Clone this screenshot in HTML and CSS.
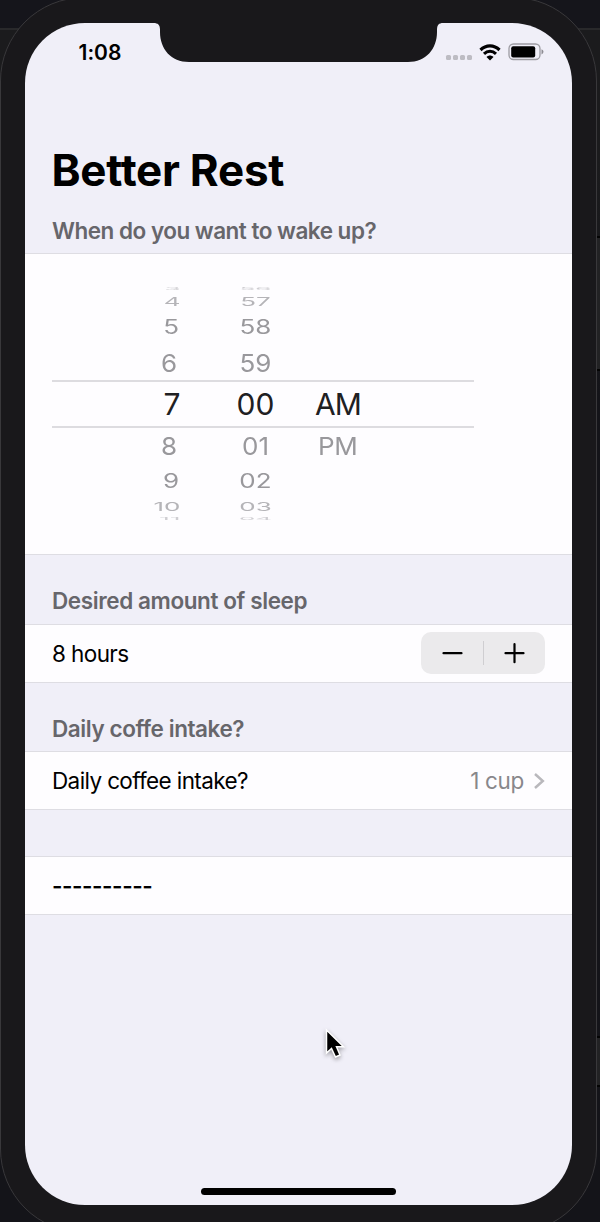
FILE: index.html
```html
<!DOCTYPE html>
<html lang="en">
<head>
<meta charset="utf-8">
<title>Better Rest</title>
<link rel="stylesheet" href="styles.css">
</head>
<body>
<div class="desktop">
  <div class="edge edge-mid"></div>
  <div class="edge edge-low"></div>
  <div class="bezel"></div>
  <main class="screen">
    <header class="status">
      <span class="time">1:08</span>
      <div class="indicators">
        <span class="signal"><i></i><i></i><i></i><i></i></span>
        <svg class="wifi" width="22" height="17" viewBox="0 0 22 17">
          <path d="M1.500 6C7 .6 15 .6 20.500 6" fill="none" stroke="#000" stroke-width="3.200"/>
          <path d="M5 9.800C8.500 6.400 13.500 6.400 17 9.800" fill="none" stroke="#000" stroke-width="3"/>
          <path d="M11 16.500L7.500 12.900C9.600 10.900 12.400 10.900 14.500 12.900Z"/>
        </svg>
        <svg class="battery" width="36" height="18" viewBox="0 0 36 18">
          <rect x="1" y="1" width="31" height="15.500" rx="4.500" fill="none" stroke="#9c9ba1" stroke-width="1.300"/>
          <rect x="3.200" y="3.200" width="24" height="11.200" rx="2"/>
          <path d="M33.500 6.200Q35.500 7 35.500 8.800T33.500 11.400Z" fill="#8e8d93"/>
        </svg>
      </div>
    </header>
    <h1 class="title">Better Rest</h1>

    <h2 class="section-title first"><span class="t-wake">When do you want to wake up?</span></h2>
    <section class="cell picker">
      <div class="wheel">
        <div class="row far"><span>3</span><span>56</span><span></span></div>
        <div class="row third"><span>4</span><span>57</span><span></span></div>
        <div class="row second"><span>5</span><span>58</span><span></span></div>
        <div class="row near"><span>6</span><span>59</span><span></span></div>
        <div class="row selected"><span>7</span><span>00</span><span>AM</span></div>
        <div class="row near below"><span>8</span><span>01</span><span>PM</span></div>
        <div class="row second below"><span>9</span><span>02</span><span></span></div>
        <div class="row third below"><span>10</span><span>03</span><span></span></div>
        <div class="row far below"><span>11</span><span>04</span><span></span></div>
      </div>
    </section>

    <h2 class="section-title sleep"><span class="t-sleep">Desired amount of sleep</span></h2>
    <section class="cell line">
      <span class="t-hours">8 hours</span>
      <div class="stepper">
        <svg width="62" height="42" viewBox="0 0 62 42"><path d="M22.500 21.200H40.500"/></svg>
        <i class="divider"></i>
        <svg width="61" height="42" viewBox="0 0 61 42"><path d="M21.500 21.200H39.500M30.500 12.200V30.200"/></svg>
      </div>
    </section>

    <h2 class="section-title coffee"><span class="t-coffe">Daily coffe intake?</span></h2>
    <section class="cell line">
      <span class="t-coffee">Daily coffee intake?</span>
      <div class="value"><span class="t-cup">1 cup</span>
        <svg width="12" height="18" viewBox="0 0 12 18"><path d="M2 2L9.800 9L2 16" fill="none" stroke="#b9b8bc" stroke-width="2.500"/></svg>
      </div>
    </section>

    <section class="cell line result"><span class="t-dash">----------</span></section>
    <div class="home"></div>
  </main>
  <svg class="notch" width="292" height="42" viewBox="0 0 292 42">
    <path d="M0 0V2H1.500C6 2 8 4 8 8.500V11C8 28 19 41 37 41H256C274 41 285 28 285 11V8.500C285 4 287 2 291 2V0Z"/>
  </svg>
  <svg class="cursor" width="24" height="34" viewBox="0 0 24 34">
    <path d="M2.500 2V25L7.500 20.500L11.500 29L16 27L12.500 18.800H19.500Z" fill="#000" stroke="#fff" stroke-width="1.500"/>
  </svg>
</div>
</body>
</html>
```
FILE: styles.css
```css
* { box-sizing: border-box; }
body { margin: 0; font-family: Inter, "Liberation Sans", sans-serif; font-variant-ligatures: none; }
h1, h2 { margin: 0; }
svg { display: block; }

.desktop {
  position: relative;
  width: 600px;
  height: 1222px;
  overflow: hidden;
  padding: 23px 28.500px 17px 25px;
  background: linear-gradient(#15151b 0 28px, #29292b 28px 30px, #1b1b1d 30px 160px, #141419 400px);
}
.edge { position: absolute; right: 0; width: 5px; background: #222224; border: solid #030303; border-width: 2px 0; }
.edge-mid { top: 236px; height: 135px; }
.edge-low { top: 1036px; height: 51px; }
.bezel {
  position: absolute;
  left: 0;
  top: -3px;
  width: 597px;
  height: 1236px;
  border: 1px solid #39383b;
  border-radius: 84px;
  background: #19181b;
}
.screen {
  position: relative;
  display: flex;
  flex-direction: column;
  height: 1182px;
  border-radius: 60px;
  overflow: hidden;
  background: #f0eff8;
  color: #000;
}
.status {
  display: flex;
  justify-content: space-between;
  align-items: center;
  height: 58px;
  padding: 0 28px 0 53.500px;
}
.time { font-size: 21px; font-weight: 600; letter-spacing: 0; }
.indicators { display: flex; align-items: center; }
.signal { display: flex; gap: 2px; padding-top: 11px; margin-right: 7px; }
.signal i { width: 4.800px; height: 4.800px; border-radius: 1.500px; background: #bdbcc3; }
.wifi { margin-right: 7px; }

.title { height: 106px; padding: 62px 26.500px 0; font-size: 44px; line-height: 54px; font-weight: 700; letter-spacing: -0.250px; white-space: nowrap; }
.section-title { display: flex; align-items: flex-end; padding: 0 27px 7px; font-size: 22.500px; line-height: 30px; font-weight: 600; color: #67666b; white-space: nowrap; }
.first { height: 66px; }
.sleep { height: 69px; padding-bottom: 8px; }
.coffee { height: 68px; }
.t-wake { letter-spacing: -0.500px; }
.t-sleep { letter-spacing: -0.400px; }
.t-coffe { letter-spacing: -0.430px; }
.t-hours { letter-spacing: -0.600px; }
.t-coffee { letter-spacing: -0.620px; }
.t-cup { letter-spacing: -0.350px; }
.t-dash { font-weight: 600; letter-spacing: -0.450px; padding-top: 1px; }
.cell { flex: none; border: solid #dedde3; border-width: 1px 0; background: #fefdff; font-size: 22.500px; }
.line { display: flex; align-items: center; justify-content: space-between; height: 59px; padding: 0 26.500px 1px 27px; }
.result { margin-top: 46px; }

.picker { height: 302px; padding: 29px 97.500px 0 27px; }
.wheel { display: flex; flex-direction: column; }
.row { display: grid; grid-template-columns: 127px 46px 1fr; column-gap: 53.500px; align-items: center; color: #99989c; font-size: 26px; line-height: 34px; }
.row span { display: block; text-align: right; transform: scaleY(var(--squash, 1)); margin: -20px 0; }
.row span:nth-child(2) { text-align: center; }
.row span:nth-child(3) { text-align: left; margin-left: -17px; letter-spacing: -1px; }
.far { height: 12px; --squash: .15; color: #cfced2; }
.third { height: 13px; --squash: .44; color: #b5b4b8; }
.second { height: 39px; --squash: .75; padding-bottom: 1px; }
.near { height: 33px; --squash: .95; padding-bottom: 2px; }
.near span:first-child { padding-right: 2px; }
.selected { height: 48px; border: solid #dddce0; border-width: 2px 0; color: #202022; font-size: 30px; }
.selected span:first-child { margin-right: -1.500px; }
.near.below { height: 37px; }
.near.below span:nth-child(3) { padding-left: 3px; letter-spacing: -0.3px; }
.second.below { height: 33px; padding-bottom: 1px; }
.third.below { height: 18px; padding-bottom: 1px; }
.third span:first-child, .far span:first-child { margin-right: -1.500px; }
.far.below { height: 7px; padding-bottom: 1px; }

.stepper { display: flex; align-items: center; width: 124px; height: 42px; border-radius: 10px; background: #ebeaec; }
.stepper path { fill: none; stroke: #000; stroke-width: 2.200; stroke-linecap: round; }
.divider { width: 1px; height: 24px; background: #cfced1; }
.value { display: flex; align-items: center; gap: 9px; padding-top: 1px; color: #88878b; }

.home { position: absolute; left: 176px; bottom: 10px; width: 195px; height: 7px; border-radius: 4px; background: #000; }
.notch { position: absolute; left: 152px; top: 21px; fill: #19181b; }
.cursor { position: absolute; left: 324px; top: 1028px; filter: drop-shadow(0 2px 2px rgba(0,0,0,.35)); }
```
